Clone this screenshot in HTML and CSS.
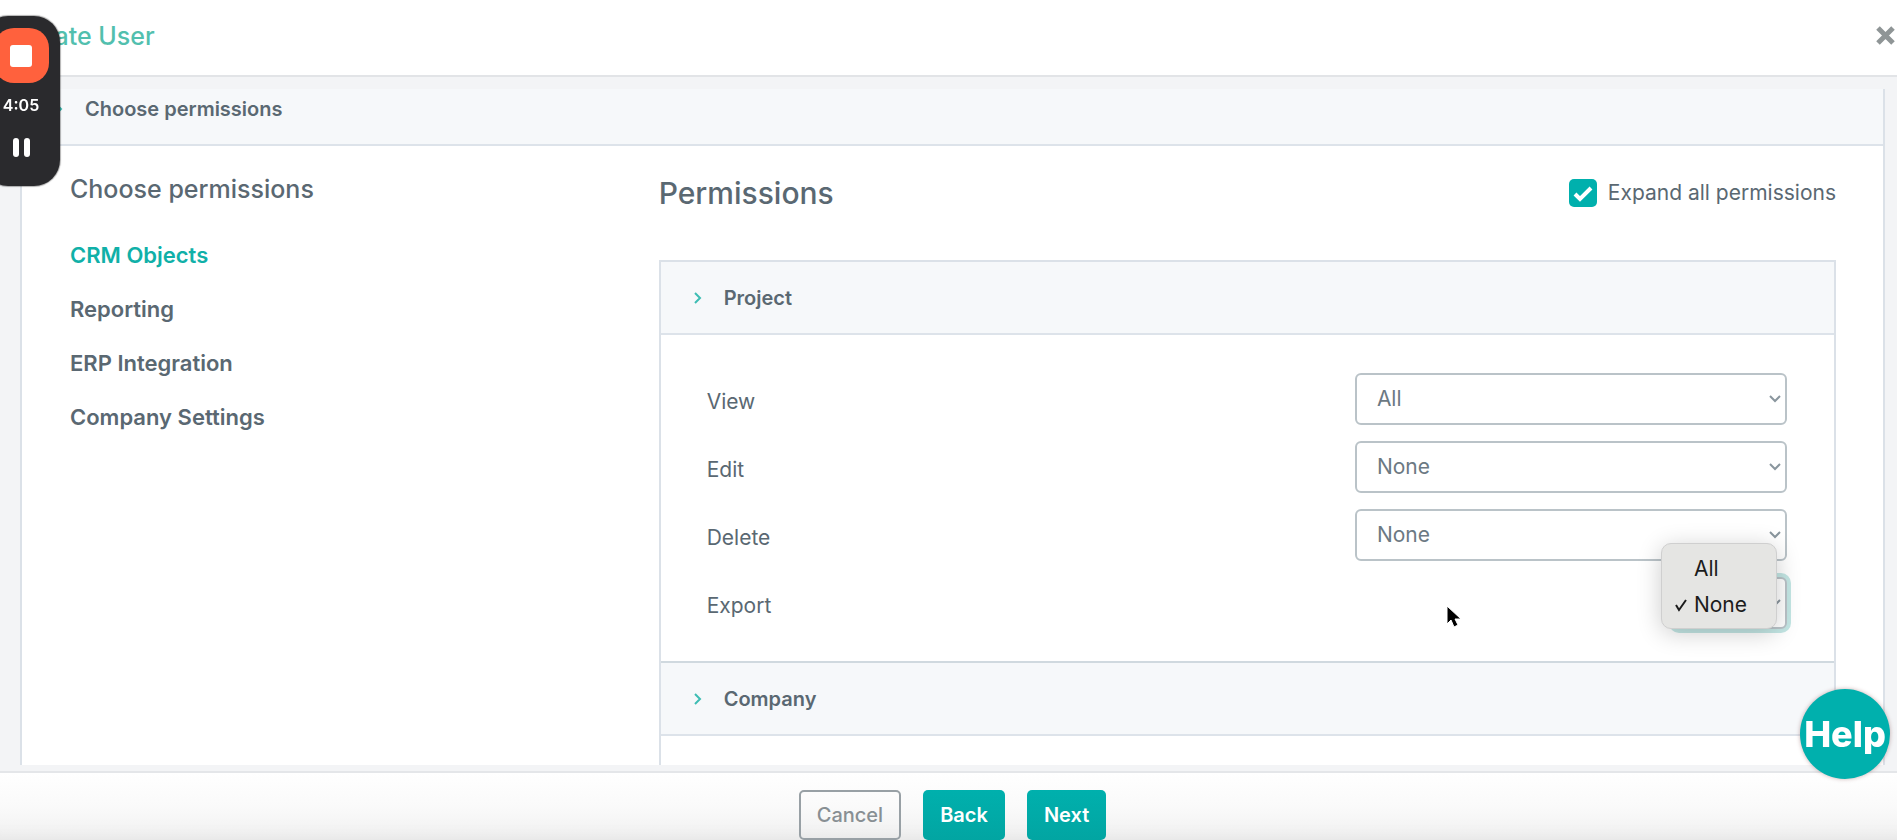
FILE: index.html
```
<!DOCTYPE html>
<html lang="en">
<head>
  <meta charset="UTF-8" />
  <meta name="viewport" content="width=device-width, initial-scale=1.0" />
  <title>Create User</title>
  <link rel="stylesheet" href="styles.css">
</head>
<body>
  <header class="modal-header">
    <h1>Create User</h1>
    <button class="close" aria-label="Close">
      <svg width="22" height="22" viewBox="0 0 22 22"><path d="M3 3l15 15M18 3L3 18" /></svg>
    </button>
  </header>

  <main class="modal-body">
    <div class="scroller">
      <section class="panel">
        <h2 class="bar">
          <svg class="chevron" width="10" height="14" viewBox="0 0 10 14"><path d="M2 2l5 5-5 5" /></svg>
          Choose permissions
        </h2>
        <div class="columns">
          <nav class="sections">
            <h3>Choose permissions</h3>
            <a href="#crm" class="active">CRM Objects</a>
            <a href="#reporting">Reporting</a>
            <a href="#erp">ERP Integration</a>
            <a href="#company">Company Settings</a>
          </nav>

          <div class="permissions">
            <div class="permissions-top">
              <h2>Permissions</h2>
              <label class="expand">
                <input type="checkbox" checked />
                Expand all permissions
              </label>
            </div>

            <div class="accordion">
              <h4 class="bar">
                <svg class="chevron" width="10" height="14" viewBox="0 0 10 14"><path d="M2 2l5 5-5 5" /></svg>
                Project
              </h4>
              <div class="rows">
                <div class="row">
                  <label for="view">View</label>
                  <select id="view"><option selected>All</option><option>None</option></select>
                </div>
                <div class="row">
                  <label for="edit">Edit</label>
                  <select id="edit"><option>All</option><option selected>None</option></select>
                </div>
                <div class="row">
                  <label for="delete">Delete</label>
                  <select id="delete"><option>All</option><option selected>None</option></select>
                </div>
                <div class="row">
                  <label for="export">Export</label>
                  <div class="open-select">
                    <select id="export" class="focused"><option></option><option>All</option><option>None</option></select>
                    <ul class="menu">
                      <li>All</li>
                      <li>
                        <svg width="14" height="16" viewBox="0 0 14 16"><path d="M2 8l3 5L12 3" /></svg>
                        None
                      </li>
                    </ul>
                  </div>
                </div>
              </div>
              <h4 class="bar second">
                <svg class="chevron" width="10" height="14" viewBox="0 0 10 14"><path d="M2 2l5 5-5 5" /></svg>
                Company
              </h4>
              <div class="rows"></div>
            </div>
          </div>
        </div>
      </section>
    </div>
  </main>

  <footer class="modal-footer">
    <button class="btn btn-outline">Cancel</button>
    <button class="btn">Back</button>
    <button class="btn">Next</button>
  </footer>

  <button class="help">Help</button>

  <div class="recorder">
    <button class="stop" aria-label="Stop recording"><span></span></button>
    <time>4:05</time>
    <button class="pause" aria-label="Pause recording"><span></span><span></span></button>
  </div>

  <svg class="cursor" width="18" height="26" viewBox="0 0 18 26"><path d="M2 1v18l4-4 3 7 4-2-3-6h6z" /></svg>
</body>
</html>
```

FILE: styles.css
```
* {
  box-sizing: border-box;
}

body {
  margin: 0;
  height: 100vh;
  display: flex;
  flex-direction: column;
  overflow: hidden;
  font-family: Inter, "Liberation Sans", sans-serif;
  font-size: 21px;
  line-height: 28px;
  color: #5a6872;
  background: #f3f4f6;
}

h1, h2, h3, h4 {
  margin: 0;
}

button, select {
  font: inherit;
  color: inherit;
}

button {
  padding: 0;
  border: none;
  background: none;
  cursor: pointer;
}

svg {
  fill: none;
  stroke: currentColor;
}

.modal-header {
  height: 77px;
  padding: 0 0 4px 12px;
  display: flex;
  align-items: center;
  justify-content: space-between;
  flex-shrink: 0;
  background: #fff;
  border-bottom: 2px solid #e2e4e7;
}

.modal-header h1 {
  font-size: 25px;
  font-weight: 500;
  color: #52bfae;
}

.close {
  display: flex;
  color: #8f9596;
  stroke-width: 5;
}

.modal-body {
  flex: 1;
  min-height: 0;
  padding: 12px 12px 6px 20px;
}

.scroller {
  height: 100%;
  overflow: hidden;
}

.panel {
  margin-top: -16px;
  min-height: 720px;
  background: #fff;
  border: solid #dbe1e8;
  border-width: 0 2px;
}

.bar {
  height: 73px;
  padding-left: 32px;
  display: flex;
  align-items: center;
  gap: 21px;
  font-size: 20px;
  font-weight: 600;
  background: #f6f8fa;
  border-bottom: 2px solid #dde3ea;
}

.chevron {
  color: #3dbdb3;
  stroke-width: 2;
}

.columns {
  padding: 23px 47px 0 48px;
  display: grid;
  grid-template-columns: 1fr 2fr;
}

.sections {
  display: flex;
  flex-direction: column;
  align-items: flex-start;
  gap: 26px;
}

.sections h3 {
  margin-bottom: 6px;
  line-height: 40px;
  font-size: 25px;
  font-weight: 500;
}

.sections a {
  color: inherit;
  font-size: 22px;
  font-weight: 600;
  text-decoration: none;
}

.sections .active {
  color: #10b0a8;
}

.permissions-top {
  height: 91px;
  padding-bottom: 44px;
  display: flex;
  align-items: center;
  justify-content: space-between;
}

.permissions-top h2 {
  font-size: 30px;
  font-weight: 500;
}

.expand {
  display: flex;
  align-items: center;
  gap: 11px;
}

.expand input {
  appearance: none;
  width: 28px;
  height: 28px;
  margin: 0;
  border-radius: 5px;
  background: #00b0ad url("data:image/svg+xml,%3Csvg xmlns='http://www.w3.org/2000/svg' viewBox='0 0 28 28'%3E%3Cpath d='M6 15l5 5L22 9' fill='none' stroke='white' stroke-width='4'/%3E%3C/svg%3E");
}

.accordion {
  border: 2px solid #dbe1e8;
  border-bottom: none;
}

.rows {
  min-height: 60px;
  padding: 38px 47px 32px 46px;
  display: grid;
  gap: 16px;
}

.row {
  display: flex;
  align-items: center;
  justify-content: space-between;
}

.row label {
  padding-top: 6px;
}

select {
  appearance: none;
  width: 40%;
  height: 52px;
  padding: 0 20px;
  border: 2px solid #bac3c8;
  border-radius: 6px;
  color: #6c7983;
  background: #fff url("data:image/svg+xml,%3Csvg xmlns='http://www.w3.org/2000/svg' width='14' height='10' viewBox='0 0 14 10'%3E%3Cpath d='M2 2l5 5 5-5' fill='none' stroke='%238a969e' stroke-width='2'/%3E%3C/svg%3E") no-repeat right 3px center;
}

.open-select {
  position: relative;
  width: 114px;
  display: flex;
}

.focused {
  width: 100%;
  box-shadow: 0 0 0 4px #c3e6e4;
}

.menu {
  position: absolute;
  right: 10px;
  bottom: 0;
  width: 116px;
  margin: 0;
  padding: 7px 11px 5px;
  list-style: none;
  line-height: 36px;
  color: #1c1c1c;
  background: #e5e5e3;
  border: 1px solid #cfcfcf;
  border-radius: 10px;
  box-shadow: 0 4px 24px rgba(0, 0, 0, 0.2);
}

.menu li {
  padding-left: 21px;
}

.menu svg {
  width: 14px;
  margin-left: -20px;
  vertical-align: -1px;
  stroke-width: 2;
}

.second {
  height: 75px;
  border-top: 2px solid #d0d9df;
}

.modal-footer {
  height: 69px;
  padding-top: 17px;
  padding-left: 8px;
  display: flex;
  justify-content: center;
  align-items: flex-start;
  gap: 22px;
  flex-shrink: 0;
  border-top: 2px solid #e4e6e9;
  background: linear-gradient(#fff, #fafafa 50%, #f0f0f0);
  box-shadow: inset 0 -20px 20px -20px rgba(0, 0, 0, 0.06);
}

.btn {
  height: 50px;
  padding: 0 17px;
  border-radius: 5px;
  font-size: 20px;
  font-weight: 600;
  color: #fff;
  background: linear-gradient(#00b0ad, #02a5a2);
}

.btn-outline {
  padding: 0 16px;
  border: 2px solid #98a0a5;
  font-weight: 500;
  color: #888f93;
  background: none;
}

.help {
  position: fixed;
  right: 7px;
  bottom: 61px;
  width: 90px;
  height: 90px;
  border-radius: 50%;
  font-size: 36px;
  font-weight: 800;
  color: #fff;
  background: #00b0ad;
  box-shadow: 0 0 4px rgba(120, 60, 60, 0.4);
}

.recorder {
  position: fixed;
  left: -18px;
  top: 16px;
  width: 78px;
  height: 170px;
  padding-top: 12px;
  display: flex;
  flex-direction: column;
  align-items: center;
  border-radius: 26px;
  color: #fff;
  background: #2a2a2d;
  box-shadow: 0 0 1px 1px rgba(0, 0, 0, 0.3);
}

.stop {
  width: 55px;
  height: 55px;
  display: grid;
  place-items: center;
  border-radius: 20px;
  background: #ff613d;
}

.stop span {
  width: 22px;
  height: 22px;
  border-radius: 3px;
  background: #fff;
}

.recorder time {
  margin: 8px 0 19px;
  font-size: 16px;
  font-weight: 600;
}

.pause {
  display: flex;
  gap: 5px;
}

.pause span {
  width: 6px;
  height: 19px;
  border-radius: 3px;
  background: #fff;
}

.cursor {
  position: fixed;
  left: 1445px;
  top: 605px;
  fill: #000;
  stroke: #fff;
}
```
